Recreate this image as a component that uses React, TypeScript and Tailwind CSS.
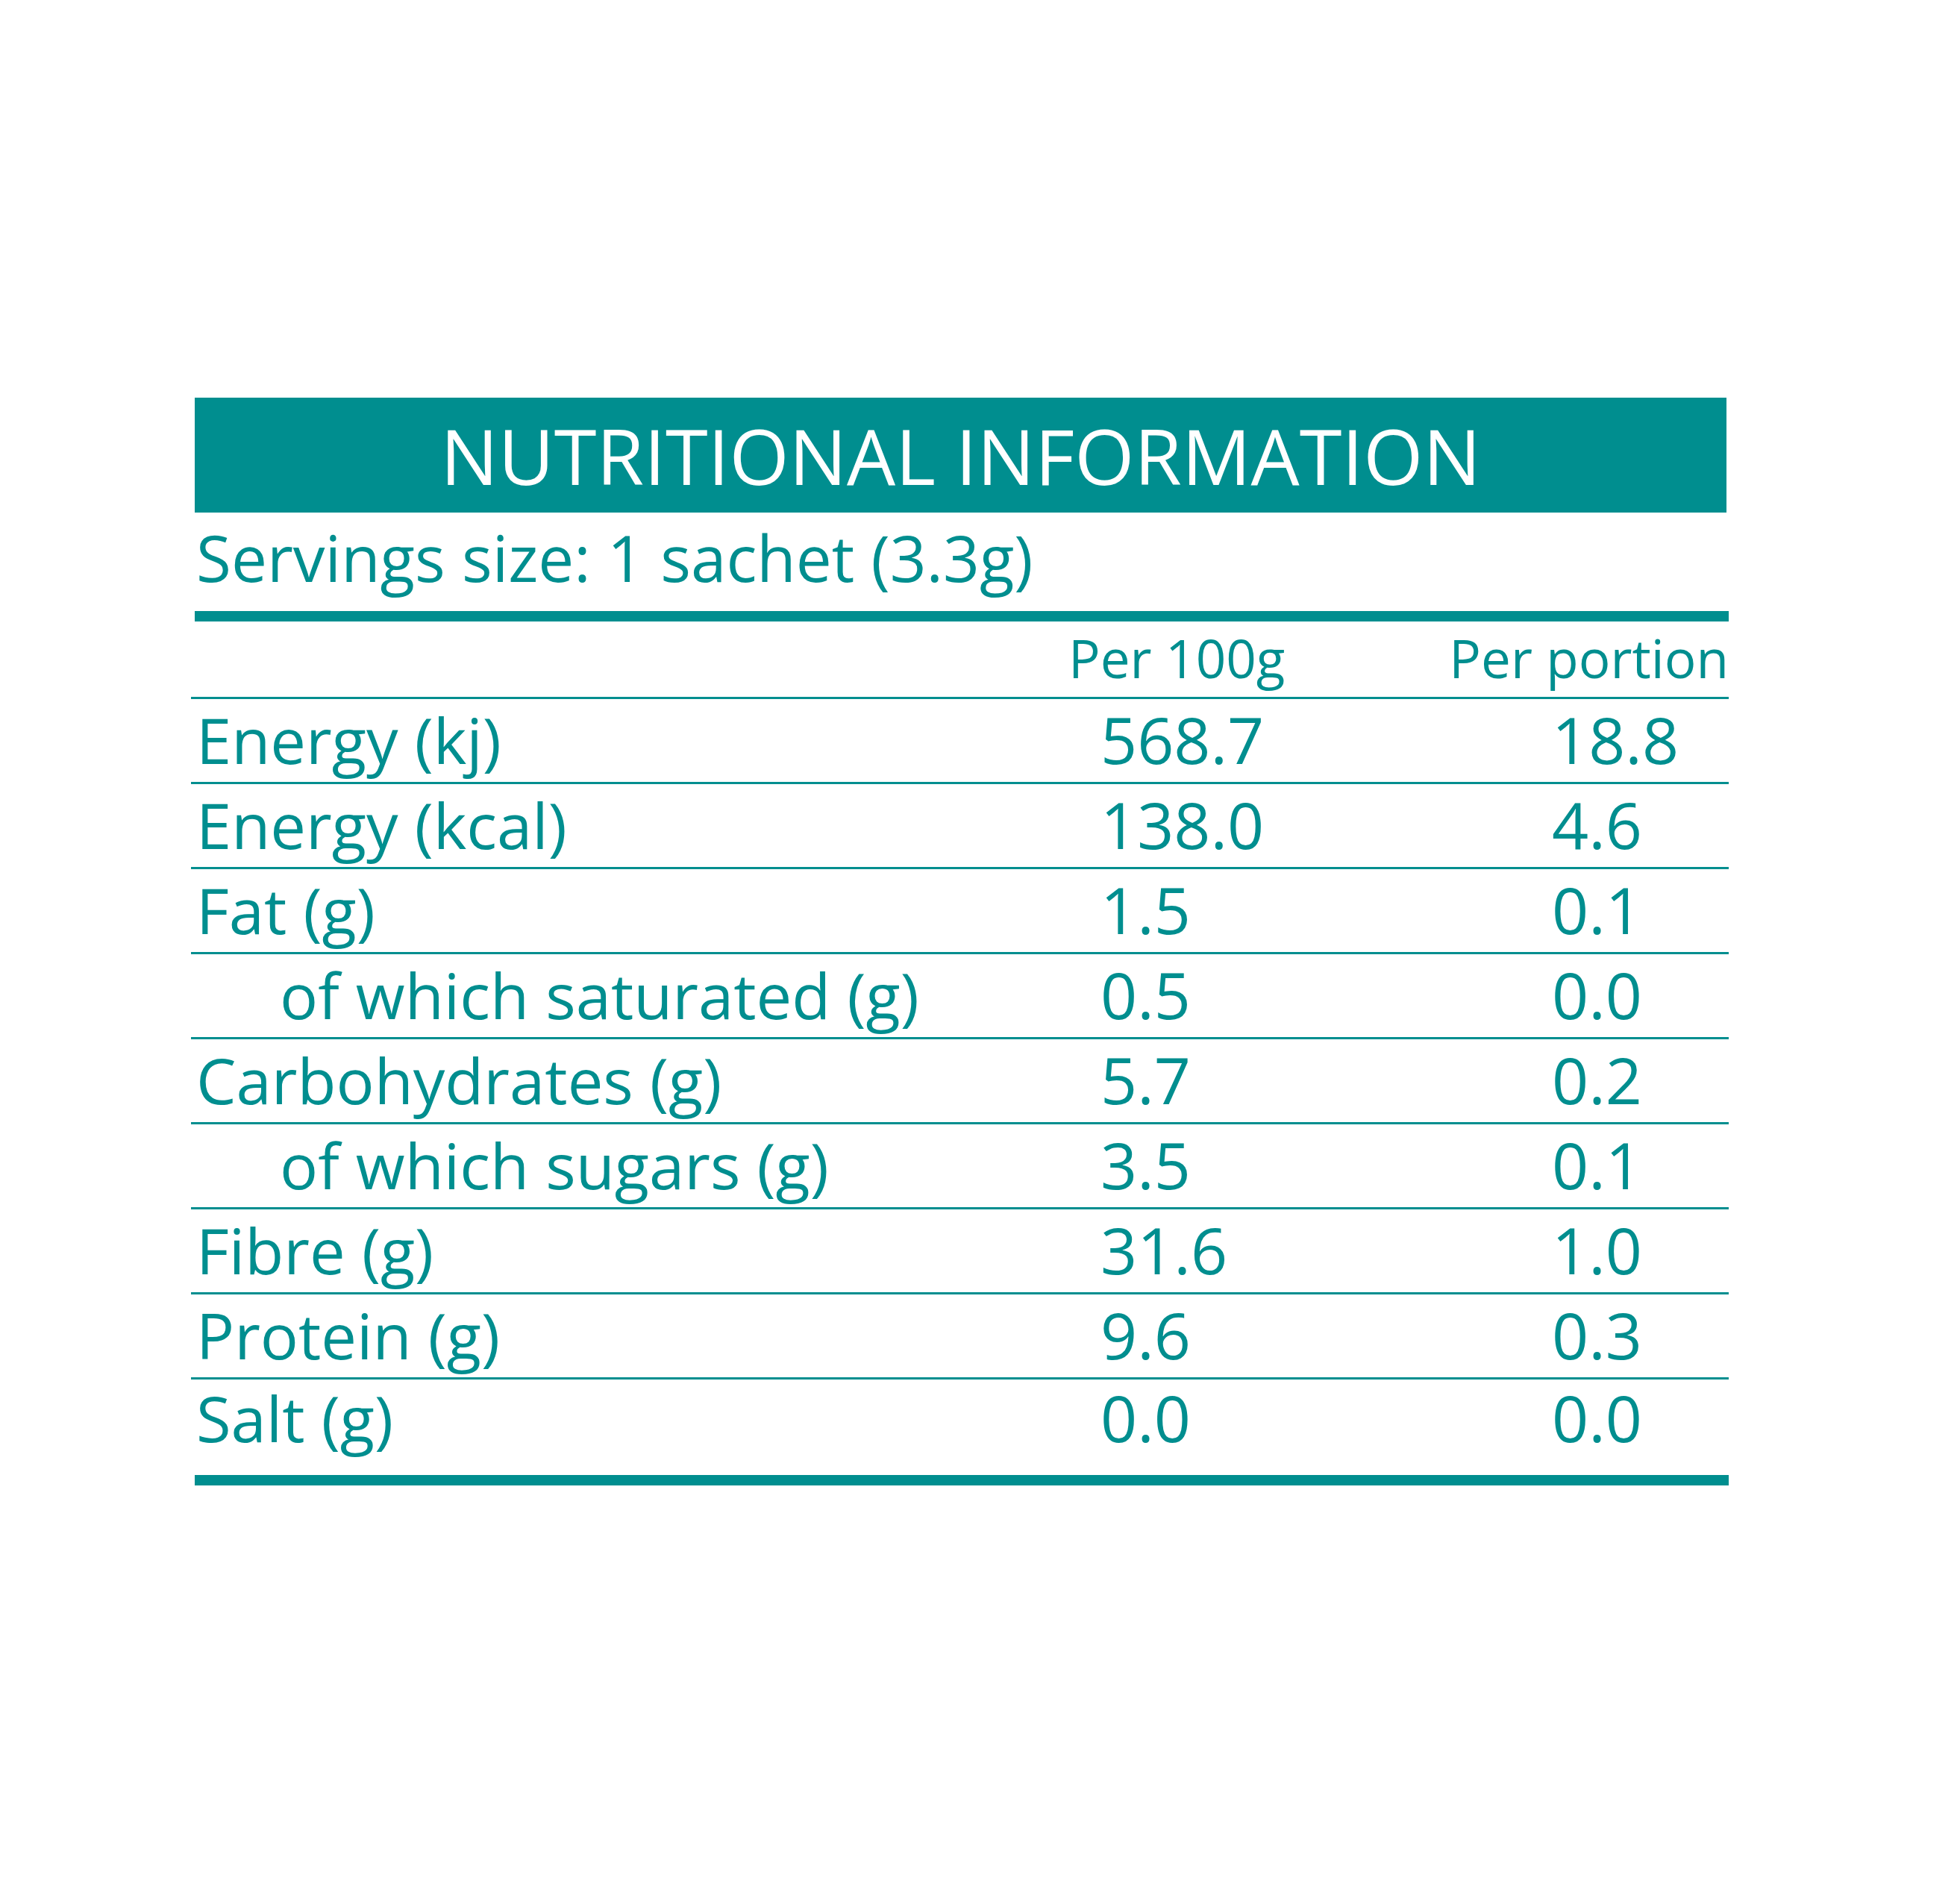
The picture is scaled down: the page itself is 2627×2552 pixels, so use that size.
import React from 'react';

interface Row {
  label: string;
  per100: string;
  portion: string;
  indent?: boolean;
}

const rows: Row[] = [
  { label: 'Energy (kj)', per100: '568.7', portion: '18.8' },
  { label: 'Energy (kcal)', per100: '138.0', portion: '4.6' },
  { label: 'Fat (g)', per100: '1.5', portion: '0.1' },
  { label: 'of which saturated (g)', per100: '0.5', portion: '0.0', indent: true },
  { label: 'Carbohydrates (g)', per100: '5.7', portion: '0.2' },
  { label: 'of which sugars (g)', per100: '3.5', portion: '0.1', indent: true },
  { label: 'Fibre (g)', per100: '31.6', portion: '1.0' },
  { label: 'Protein (g)', per100: '9.6', portion: '0.3' },
  { label: 'Salt (g)', per100: '0.0', portion: '0.0' },
];

const App: React.FC = () => {
  return (
    <div className="min-h-[2552px] w-full bg-white pl-[256px] pt-[533px] font-['Open_Sans',sans-serif] text-[#008e8f]">
      <div className="w-[2061px]">
        <div className="ml-[5px] flex h-[154px] w-[2053px] items-center justify-center bg-[#008e8f]">
          <h1 className="whitespace-nowrap text-[103px] font-normal leading-none text-white">NUTRITIONAL INFORMATION</h1>
        </div>

        <p className="mt-[16px] whitespace-nowrap pl-[7px] text-[85.5px] leading-[88px]">Servings size: 1 sachet (3.3g)</p>

        <div className="ml-[5px] mt-[28px] h-[14px] w-[2056px] bg-[#008e8f]" />

        <div className="flex h-[104px] items-end whitespace-nowrap border-b-[3px] border-[#008e8f] pb-[17px] text-[71px] leading-[71px]">
          <span className="ml-[1176px] w-[511px]">Per 100g</span>
          <span>Per portion</span>
        </div>

        {rows.map((row, i) => (
          <div
            key={row.label}
            className={
              i === rows.length - 1
                ? 'flex h-[111px] items-baseline whitespace-nowrap pt-[7px] text-[86px] leading-[87px]'
                : 'flex h-[114px] items-baseline whitespace-nowrap border-b-[3px] border-[#008e8f] pt-[10px] text-[86px] leading-[87px]'
            }
          >
            <span className={row.indent ? 'w-[1219px] pl-[119px] text-[85px]' : 'w-[1219px] pl-[7px] text-[85px]'}>
              {row.label}
            </span>
            <span className="w-[605px]">{row.per100}</span>
            <span>{row.portion}</span>
          </div>
        ))}

        <div className="ml-[5px] mt-[17px] h-[14px] w-[2056px] bg-[#008e8f]" />
      </div>
    </div>
  );
};

export default App;
